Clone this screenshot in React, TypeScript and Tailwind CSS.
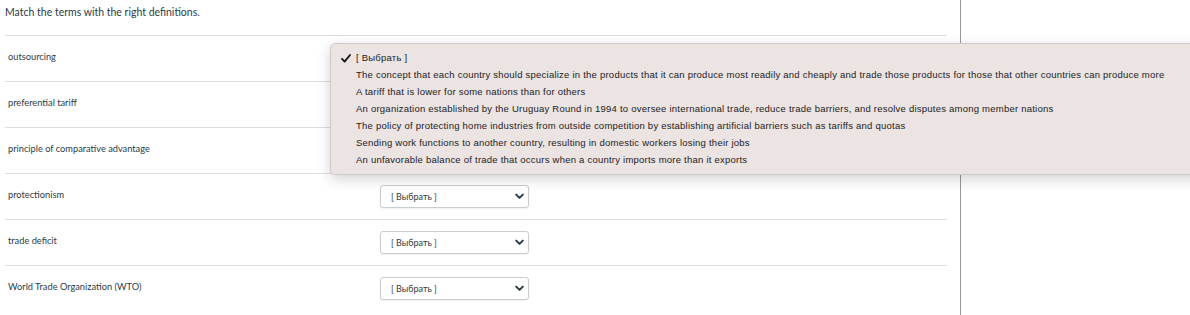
const terms = [
  "outsourcing",
  "preferential tariff",
  "principle of comparative advantage",
  "protectionism",
  "trade deficit",
  "World Trade Organization (WTO)",
];

const options = [
  "The concept that each country should specialize in the products that it can produce most readily and cheaply and trade those products for those that other countries can produce more",
  "A tariff that is lower for some nations than for others",
  "An organization established by the Uruguay Round in 1994 to oversee international trade, reduce trade barriers, and resolve disputes among member nations",
  "The policy of protecting home industries from outside competition by establishing artificial barriers such as tariffs and quotas",
  "Sending work functions to another country, resulting in domestic workers losing their jobs",
  "An unfavorable balance of trade that occurs when a country imports more than it exports",
];

function Picker() {
  return (
    <div className="flex h-[23px] w-[149px] items-center justify-between rounded-[3px] border border-[#c7cdd1] bg-white pl-[10px] pr-[4px] shadow-[0_1px_2px_rgba(0,0,0,0.06)]">
      <span className="text-[9px] text-[#2d3b45]">[ Выбрать ]</span>
      <svg width="9" height="7" viewBox="0 0 9 7">
        <path d="M1.2 1.6 L4.5 4.9 L7.8 1.6" fill="none" stroke="#2d3b45" strokeWidth="2" strokeLinecap="round" strokeLinejoin="round" />
      </svg>
    </div>
  );
}

export default function App() {
  return (
    <div className="relative h-[315px] w-[1190px] overflow-hidden bg-white font-['Lato','Liberation_Sans',sans-serif] text-[#2d3b45]">
      <div className="flex h-full">
        <div className="h-full w-[961px] border-r border-[#9a9a9a] pl-[5px] pr-[13px]">
          <p className="pt-[4px] pb-[15px] text-[10.5px] leading-[16px]">Match the terms with the right definitions.</p>

          {terms.map((t) => (
            <div key={t} className="flex h-[46px] items-center border-t border-[#dcdfe1] pl-[3px]">
              <span className="mb-[3px] w-[372px] text-[9.25px]">{t}</span>
              <Picker />
            </div>
          ))}
        </div>
      </div>

      {/* open native-style menu */}
      <div className="absolute left-[330px] top-[43px] w-[900px] rounded-[5px] border border-[#cfc8c8] bg-[#ece3e3] pt-[6px] pb-[5px] font-['Liberation_Sans',Arial,sans-serif] text-[9.5px] tracking-[0.23px] text-[#222] shadow-[0_4px_14px_rgba(0,0,0,0.18)]">
        <div className="flex h-[17px] items-center">
          <svg width="25" height="17" viewBox="0 0 25 17" className="shrink-0">
            <path d="M11 8.8 L13.6 11.6 L19 5" fill="none" stroke="#111" strokeWidth="1.8" strokeLinecap="round" strokeLinejoin="round" />
          </svg>
          <span>[ Выбрать ]</span>
        </div>
        {options.map((o) => (
          <div key={o} className="flex h-[17px] items-center pl-[25px] whitespace-nowrap">
            {o}
          </div>
        ))}
      </div>
    </div>
  );
}
